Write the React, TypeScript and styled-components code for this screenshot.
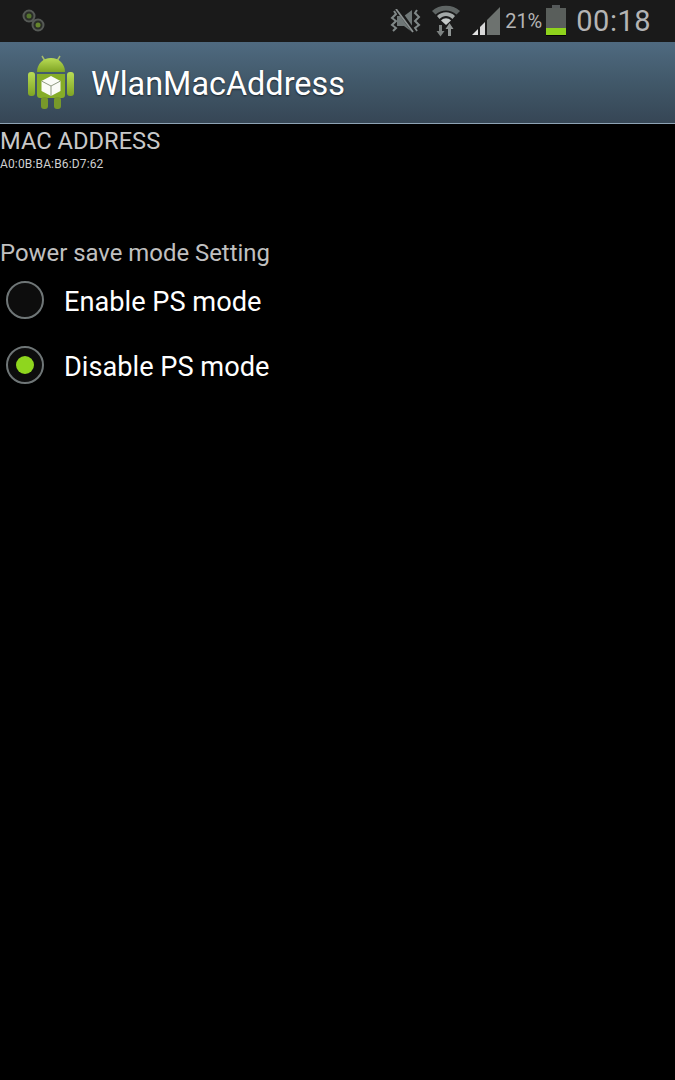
import React, { FC } from 'react'
import styled, { createGlobalStyle } from 'styled-components'

const GlobalStyle = createGlobalStyle`
	html, body {
		margin: 0;
		padding: 0;
		background: #000;
		font-family: Roboto, "Liberation Sans", sans-serif;
	}
`

const SettingsIcon: FC = () => (
	<svg width="24" height="24" viewBox="0 0 24 24">
		<path d="M7 8l10 9" stroke="#4c504c" strokeWidth="4" />
		<circle cx="7" cy="7" r="5.500" fill="#2a2d28" stroke="#565a56" strokeWidth="2" />
		<circle cx="16" cy="16" r="5.500" fill="#2a2d28" stroke="#565a56" strokeWidth="2" />
		<circle cx="7" cy="7" r="2.500" fill="#55752c" />
		<circle cx="16" cy="16" r="2.500" fill="#66862c" />
	</svg>
)

const MuteIcon: FC = () => (
	<svg width="31" height="24" viewBox="0 0 31 24">
		<path d="M7 7h7l8-6v22l-8-6H7z" fill="#6f7777" />
		<path d="M4 2l2 3-4 4 4 3-4 4 4 3-3 3M27 1l-2 3 4 4-4 4 4 4-4 3 2 3" fill="none" stroke="#808888" strokeWidth="2" />
		<path d="M7 -1l17 24" stroke="#1a1a1a" strokeWidth="4" />
		<path d="M6 0l17 23" stroke="#8a9090" strokeWidth="1.800" />
	</svg>
)

const WifiIcon: FC = () => (
	<svg width="28" height="32" viewBox="0 0 28 32">
		<path d="M0 6C7 -1 21 -1 28 6l-3.500 3.500C18 4 10 4 3.500 9.500z" fill="#5f6564" />
		<path d="M5 11C10 6 18 6 23 11l-2.500 3C16.500 10 11.500 10 7.500 14z" fill="#a4a9a8" />
		<path d="M9 15.500c3-3 7-3 10 0l-5 4.500z" fill="#c6cac9" />
		<path d="M7 20h3v6h2.500l-4 5.500-4-5.500H7z" fill="#7d8281" />
		<path d="M16 31v-7h-2.500l4-6 4 6H19v7z" fill="#8f9493" />
	</svg>
)

const SignalIcon: FC = () => (
	<svg width="28" height="29" viewBox="0 0 28 29">
		<path d="M0 28l6-6v6z" fill="#e2e2e2" />
		<path d="M8 28v-8l5-5v13z" fill="#d8d8d8" />
		<path d="M15 28V13L28 0v28z" fill="#6d726f" />
	</svg>
)

const BatteryIcon: FC = () => (
	<svg width="20" height="32" viewBox="0 0 20 32">
		<rect x="6" y="0" width="8" height="3" fill="#55595a" />
		<rect x="0" y="3" width="20" height="20" fill="#595e5b" />
		<rect x="0" y="23" width="20" height="7" fill="#8fd31c" />
		<rect x="0" y="30" width="20" height="1" fill="#050505" />
	</svg>
)

const AndroidLogo: FC = () => (
	<svg width="46" height="55" viewBox="0 0 46 55">
		<defs>
			<linearGradient id="droid" x1="0" y1="0" x2="0" y2="1">
				<stop offset="0" stopColor="#b9dc55" />
				<stop offset="1" stopColor="#7fa424" />
			</linearGradient>
		</defs>
		<path d="M14 1l3 5M32 1l-3 5" stroke="#a6bb6a" strokeWidth="1.500" />
		<path d="M9 17C9 9 15 3 23 3s14 6 14 14z" fill="url(#droid)" />
		<path d="M9 19h28v21a3 3 0 0 1-3 3H12a3 3 0 0 1-3-3z" fill="#86ad28" />
		<rect x="0" y="17" width="7" height="24" rx="3" fill="url(#droid)" />
		<rect x="39" y="17" width="7" height="24" rx="3" fill="url(#droid)" />
		<rect x="13" y="42" width="7" height="12" rx="3" fill="#78992a" />
		<rect x="26" y="42" width="7" height="12" rx="3" fill="#78992a" />
		<path d="M23 21l9.500 5v10L23 41l-9.500-5V26z" fill="#fafbf6" />
		<path d="M23 31v10M13.500 26l9.500 5 9.500-5" stroke="#8f9a80" strokeWidth="1" fill="none" />
	</svg>
)

type RadioRowProps = {
	label: string
	checked?: boolean
}

const RadioRow: FC<RadioRowProps> = ({ label, checked }) => (
	<Row>
		<RadioCircle>{checked && <RadioDot />}</RadioCircle>
		<RadioLabel>{label}</RadioLabel>
	</Row>
)

const App: FC = () => {
	return (
		<Screen>
			<GlobalStyle />
			<StatusBar>
				<SettingsIcon />
				<StatusRight>
					<MuteIcon />
					<WifiSlot><WifiIcon /></WifiSlot>
					<SignalSlot><SignalIcon /></SignalSlot>
					<Percent>21%</Percent>
					<BatteryIcon />
					<Clock>00:18</Clock>
				</StatusRight>
			</StatusBar>
			<ActionBar>
				<AndroidLogo />
				<AppTitle>WlanMacAddress</AppTitle>
			</ActionBar>
			<Content>
				<SectionLabel>MAC ADDRESS</SectionLabel>
				<MacValue>A0:0B:BA:B6:D7:62</MacValue>
				<PowerLabel>Power save mode Setting</PowerLabel>
				<RadioRow label="Enable PS mode" />
				<RadioRow label="Disable PS mode" checked />
			</Content>
		</Screen>
	)
}

export default App

const Screen = styled.div`
	width: 675px;
	height: 1080px;
	background: #000;
	overflow: hidden;
`

const StatusBar = styled.div`
	height: 42px;
	box-sizing: border-box;
	background: #1a1a1a;
	display: flex;
	align-items: center;
	justify-content: space-between;
	padding: 0 24px 0 22px;
`

const StatusRight = styled.div`
	display: flex;
	align-items: center;
`

const WifiSlot = styled.div`
	display: flex;
	margin-left: 11px;
`

const SignalSlot = styled.div`
	display: flex;
	margin-left: 12px;
`

const Percent = styled.span`
	margin: 0 4px 0 5px;
	color: #b4b4b4;
	font-size: 20px;
`

const Clock = styled.span`
	margin-left: 10px;
	color: #b4b4b4;
	font-size: 29px;
	letter-spacing: 0.5px;
`

const ActionBar = styled.div`
	height: 82px;
	box-sizing: border-box;
	display: flex;
	align-items: center;
	gap: 17px;
	padding-left: 28px;
	background: linear-gradient(#4f6a80, #415869 50%, #364655);
	border-bottom: 1px solid #8ea3b4;
`

const AppTitle = styled.div`
	padding-top: 3px;
	color: #fff;
	font-size: 32.4px;
	text-shadow: 0 1px 2px rgba(0, 0, 0, 0.6);
`

const Content = styled.div`
	display: flex;
	flex-direction: column;
`

const SectionLabel = styled.div`
	margin-top: 2px;
	color: #c8c8c8;
	font-size: 23.7px;
	line-height: 30px;
`

const MacValue = styled.div`
	padding-top: 1px;
	color: #d0d0d0;
	font-size: 12px;
	line-height: 14px;
	letter-spacing: 0.15px;
`

const PowerLabel = styled.div`
	margin-top: 67px;
	color: #c0c0c0;
	font-size: 23.9px;
	line-height: 30px;
`

const Row = styled.div`
	height: 65px;
	display: flex;
	align-items: center;
	padding-left: 6px;
`

const RadioCircle = styled.div`
	width: 38px;
	height: 38px;
	margin-bottom: 2px;
	box-sizing: border-box;
	border: 2px solid #6f7677;
	border-radius: 50%;
	background: #0d0d0d;
	display: flex;
	align-items: center;
	justify-content: center;
`

const RadioDot = styled.div`
	width: 18px;
	height: 18px;
	border-radius: 50%;
	background: #8fd61e;
`

const RadioLabel = styled.div`
	margin-left: 20px;
	padding-top: 2px;
	color: #fff;
	font-size: 27.2px;
`
